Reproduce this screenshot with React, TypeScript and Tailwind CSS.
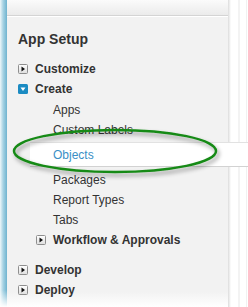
import React from 'react';

const Collapsed = () => (
  <svg width="10" height="10" viewBox="0 0 10 10" className="shrink-0">
    <defs>
      <linearGradient id="cg" x1="0" y1="0" x2="0" y2="1">
        <stop offset="0" stopColor="#ffffff" />
        <stop offset="1" stopColor="#dedede" />
      </linearGradient>
    </defs>
    <rect x="0.5" y="0.5" width="9" height="9" rx="1" fill="url(#cg)" stroke="#8e8e8e" />
    <path d="M3.5 2.5 L7 5 L3.5 7.5 Z" fill="#111" />
  </svg>
);

const Expanded = () => (
  <svg width="10" height="10" viewBox="0 0 10 10" className="shrink-0">
    <rect x="0" y="0" width="10" height="10" rx="1.5" fill="#1b8bc2" />
    <path d="M2.5 3.5 L7.5 3.5 L5 7 Z" fill="#ffffff" />
  </svg>
);

const Top = ({ label, open, className = '' }: { label: string; open?: boolean; className?: string }) => (
  <div className={`flex h-5 items-center gap-[7px] pl-[11px] font-bold text-[12px] text-[#333] ${className}`}>
    {open ? <Expanded /> : <Collapsed />}
    <span>{label}</span>
  </div>
);

const Sub = ({ label }: { label: string }) => (
  <div className="flex h-5 items-center pl-[46px] text-[12px] text-[#333]">{label}</div>
);

export default function App() {
  return (
    <div
      className="relative flex h-[307px] w-[248px] overflow-hidden bg-white"
      style={{ fontFamily: '"Liberation Sans", Arial, sans-serif' }}
    >
      <div className="w-[7px] shrink-0 bg-[linear-gradient(to_bottom,transparent_0,transparent_290px,#ffffff_307px),linear-gradient(to_right,#eef7fa_0,#a6d2e3_45%,#6fb3cf_100%)]" />

      <div className="relative w-[221px] shrink-0 bg-[linear-gradient(to_bottom,#f2f2f2_0,#f2f2f2_292px,#ffffff_307px)]">
        <div className="h-4 border-b border-[#d4d4d4] bg-gradient-to-b from-[#fbfbfb] to-[#ebebeb]" />
        <div className="h-px bg-white" />

        <div className="pt-[14px]">
          <div className="h-4 pl-[11px] text-[14px] font-bold leading-4 text-[#333]">App Setup</div>

          <Top label="Customize" className="mt-3" />
          <Top label="Create" open />

          <div className="mt-px">
            <Sub label="Apps" />
            <Sub label="Custom Labels" />
            <div className="relative z-10 ml-[23px] mt-[2px] mb-[3px] flex h-[25px] w-[218px] items-center border-y border-t-[#e2e2e2] border-b-[#d2d2d2] bg-white pl-[23px] text-[12px] text-[#3a8fc6]">
              Objects
            </div>
            <Sub label="Packages" />
            <Sub label="Report Types" />
            <Sub label="Tabs" />
            <div className="flex h-5 items-center gap-[7px] pl-[29px] text-[12px] font-bold text-[#333]">
              <Collapsed />
              <span>Workflow &amp; Approvals</span>
            </div>
          </div>

          <Top label="Develop" className="mt-[10px]" />
          <Top label="Deploy" />
        </div>
      </div>

      <div className="w-[3px] shrink-0 bg-gradient-to-r from-[#dcdcdc] to-white" />

      <div className="flex flex-1 gap-[6px] pl-[7px]">
        <div className="w-[2px] bg-[#f3f3f3]" />
        <div className="w-px bg-[#f1f1f1]" />
      </div>

      <svg className="pointer-events-none absolute left-0 top-0 z-20" width="248" height="307">
        <defs>
          <filter id="sh" x="-20%" y="-50%" width="140%" height="200%">
            <feDropShadow dx="2" dy="3" stdDeviation="2" floodColor="#000" floodOpacity="0.4" />
          </filter>
        </defs>
        <ellipse cx="115" cy="151" rx="101" ry="21" fill="none" stroke="#178a17" strokeWidth="2.5" filter="url(#sh)" />
      </svg>
    </div>
  );
}
